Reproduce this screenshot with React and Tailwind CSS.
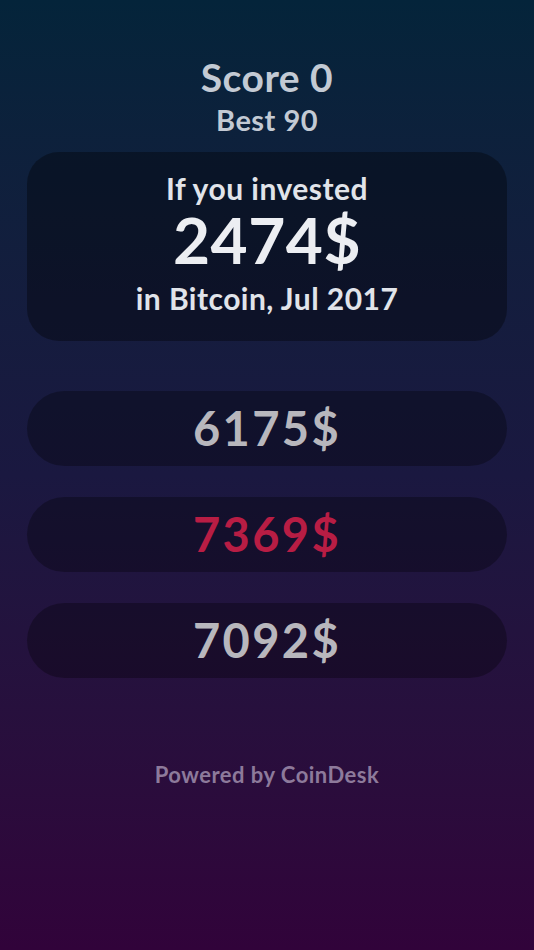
import React from "react";

const OPTIONS = [
  { value: 6175, wrong: false },
  { value: 7369, wrong: true },
  { value: 7092, wrong: false },
];

const App = () => {
  return (
    <div
      className="flex h-[950px] w-full flex-col items-center bg-gradient-to-b from-[#04243a] via-[#1a1840] to-[#31033a] px-[27px] font-['Lato',sans-serif] tracking-[0.03em]"
    >
      <h1 className="mt-[52px] text-[39px] font-bold leading-[50px] text-[#c3cad4]">Score 0</h1>
      <p className="text-[29px] font-bold leading-[36px] text-[#c3cad4]">Best 90</p>

      <div className="mt-[14px] flex h-[189px] w-full flex-col items-center rounded-[32px] bg-black/35 pt-[18px]">
        <p className="text-[30px] font-bold leading-[36px] text-[#e1e4ea]">If you invested</p>
        <p className="mt-[2px] text-[64px] font-bold leading-[64px] text-[#eceef2]">2474$</p>
        <p className="mt-[8px] text-[30px] font-bold leading-[36px] text-[#e1e4ea]">in Bitcoin, Jul 2017</p>
      </div>

      <div className="mt-[50px] flex w-full flex-col gap-[31px]">
        {OPTIONS.map((option) => (
          <button
            key={option.value}
            className={`flex h-[75px] w-full items-center justify-center rounded-full bg-black/30 text-[47px] font-bold tracking-[0.05em] ${
              option.wrong ? "text-[#b81d44]" : "text-[#b8b7bd]"
            }`}
          >
            {option.value}$
          </button>
        ))}
      </div>

      <p className="mt-[80px] text-[22px] font-bold text-[#8d7a9b]">Powered by CoinDesk</p>
    </div>
  );
};

export default App;
